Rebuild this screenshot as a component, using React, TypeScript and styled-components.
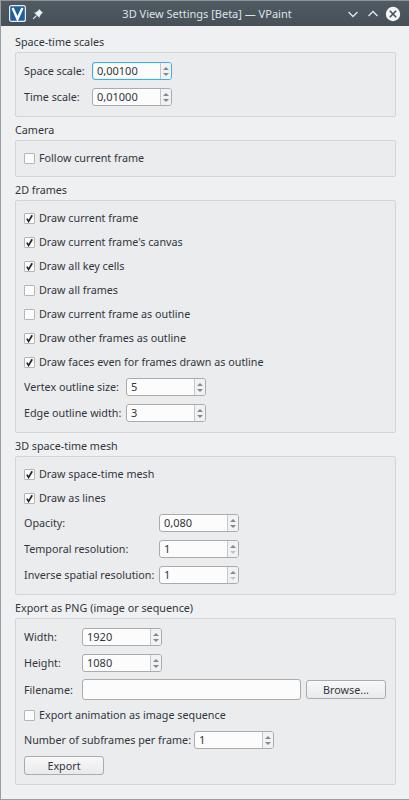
import React from "react";
import styled, { createGlobalStyle } from "styled-components";

const Global = createGlobalStyle`
  html, body { margin: 0; padding: 0; background: #eff0f1; }
  body { font-family: "Noto Sans", "DejaVu Sans", sans-serif; font-size: 10.75px; color: #31363b; }
`;

const Win = styled.div`
  width: 409px; height: 800px; box-sizing: border-box; display: flex; flex-direction: column;
  background: #eff0f1; overflow: hidden;
  border-left: 1px solid #9b9ea0; border-bottom: 1px solid #9b9ea0;
`;
const TitleBar = styled.div`
  height: 26px; flex: none; margin-left: -1px; display: flex; align-items: center;
  border-top: 1px solid #8f9396; box-sizing: border-box;
  background: linear-gradient(#4f5a62, #475057); color: #dfe2e4; padding: 0 8px 0 9px;
`;
const Logo = styled.svg`width: 17px; height: 17px; flex: none;`;
const Pin = styled.svg`width: 12px; height: 12px; margin-left: 6px; flex: none;`;
const TitleText = styled.div`flex: 1; text-align: center; font-size: 11px; padding-left: 29px; white-space: nowrap;`;
const WinBtn = styled.svg`width: 16px; height: 16px; flex: none; margin-left: 4px;`;

const Content = styled.div`
  flex: 1; padding: 8px 13px 0 14px; display: flex; flex-direction: column; gap: 5px;
`;
const Section = styled.section`display: flex; flex-direction: column;`;
const SectionTitle = styled.div`height: 16px; line-height: 16px; margin-bottom: 2px;`;
const Box = styled.div<{ $top?: number; $bottom?: number }>`
  border: 1px solid #d2d4d6; border-radius: 2px; background: #ebecee;
  padding: ${(p) => p.$top ?? 8}px 9px ${(p) => p.$bottom ?? 10}px 8px; display: flex; flex-direction: column;
`;
const Row = styled.div<{ $mt?: number }>`
  display: flex; align-items: center; min-height: 18px; margin-top: ${(p) => p.$mt ?? 0}px;
`;
const Check = styled.span`
  width: 9px; height: 9px; border: 1px solid #b4b6b8; border-radius: 1px; background: #fcfcfc;
  margin-right: 4px; flex: none; display: flex; align-items: center; justify-content: center;
`;
const CheckMark = styled.svg`width: 9px; height: 9px; display: block;`;
const Label = styled.span<{ $w?: number }>`
  white-space: nowrap; ${(p) => (p.$w ? `width: ${p.$w}px; flex: none;` : "")}
`;
const Spin = styled.div<{ $focus?: boolean }>`
  width: 80px; height: 18px; box-sizing: border-box; flex: none; display: flex;
  border: 1px solid ${(p) => (p.$focus ? "#3daee9" : "#a9abad")}; border-radius: 3px; background: #fcfcfc;
  ${(p) => (p.$focus ? "box-shadow: inset 0 0 1px #3daee9;" : "")}
`;
const SpinValue = styled.div`flex: 1; padding-left: 4px; line-height: 16px; font-size: 11px;`;
const SpinButtons = styled.div`
  width: 10px; flex: none; border-left: 1px solid #c4c6c8; background: #f1f2f3; border-radius: 0 2px 2px 0;
  display: flex; flex-direction: column; align-items: center; justify-content: center; gap: 3px;
`;
const Arrow = styled.span<{ $down?: boolean; $dim?: boolean }>`
  width: 0; height: 0; border-left: 3px solid transparent; border-right: 3px solid transparent;
  ${(p) => (p.$down ? "border-top" : "border-bottom")}: 3.5px solid ${(p) => (p.$dim ? "#c2c4c6" : "#85898c")};
`;
const LineEdit = styled.div`
  width: 219px; height: 21px; box-sizing: border-box; flex: none;
  border: 1px solid #a9abad; border-radius: 3px; background: #fcfcfc;
`;
const Button = styled.button<{ $ml?: number }>`
  width: 80px; height: 19px; box-sizing: border-box; padding: 0; flex: none; margin-left: ${(p) => p.$ml ?? 0}px;
  font: inherit; color: inherit; border: 1px solid #a9abad; border-radius: 3px;
  background: linear-gradient(#f8f8f9, #e9eaeb);
`;

const C = ({ on, children, mt }: { on?: boolean; children: React.ReactNode; mt?: number }) => (
  <Row $mt={mt}>
    <Check>
      {on && (
        <CheckMark viewBox="0 0 9 9">
          <path d="M1.8 4.6 L3.6 7.4 L7.2 1.2" fill="none" stroke="#23272b" strokeWidth="1.7" />
        </CheckMark>
      )}
    </Check>
    <Label>{children}</Label>
  </Row>
);

const S = ({ label, w, value, focus, dim, mt }: { label: string; w: number; value: string; focus?: boolean; dim?: boolean; mt?: number }) => (
  <Row $mt={mt}>
    <Label $w={w}>{label}</Label>
    <Spin $focus={focus}>
      <SpinValue>{value}</SpinValue>
      <SpinButtons>
        <Arrow />
        <Arrow $down $dim={dim} />
      </SpinButtons>
    </Spin>
  </Row>
);

export default function App() {
  return (
    <Win>
      <Global />
      <TitleBar>
        <Logo viewBox="0 0 17 17">
          <rect x="0.6" y="0.6" width="15.8" height="15.8" rx="2" fill="#1d5f9f" stroke="#e8eef4" strokeWidth="1.2" />
          <path d="M3.6 3 L8.5 14 L13.4 3" fill="none" stroke="#fff" strokeWidth="2.4" />
        </Logo>
        <Pin viewBox="0 0 12 12">
          <path d="M7 1 L11 5 L9.6 5.6 L7.6 8.4 L7.6 10 L2 4.4 L3.6 4.4 L6.4 2.4 Z" fill="#eef0f1" />
          <path d="M4.4 7.6 L1.2 10.8" stroke="#eef0f1" strokeWidth="1.2" />
        </Pin>
        <TitleText>3D View Settings [Beta] — VPaint</TitleText>
        <WinBtn viewBox="0 0 16 16">
          <path d="M3.5 6 L8 10.5 L12.5 6" fill="none" stroke="#e6e8ea" strokeWidth="1.3" />
        </WinBtn>
        <WinBtn viewBox="0 0 16 16">
          <path d="M3.5 10 L8 5.5 L12.5 10" fill="none" stroke="#e6e8ea" strokeWidth="1.3" />
        </WinBtn>
        <WinBtn viewBox="0 0 16 16">
          <circle cx="8" cy="8" r="7.2" fill="#f4f5f6" />
          <path d="M4.8 4.8 L11.2 11.2 M11.2 4.8 L4.8 11.2" stroke="#474f56" strokeWidth="1.6" />
        </WinBtn>
      </TitleBar>
      <Content>
        <Section>
          <SectionTitle>Space-time scales</SectionTitle>
          <Box $top={9}>
            <S label="Space scale:" w={68} value="0,00100" focus />
            <S label="Time scale:" w={68} value="0,01000" mt={8} />
          </Box>
        </Section>
        <Section>
          <SectionTitle>Camera</SectionTitle>
          <Box $bottom={9}>
            <C>Follow current frame</C>
          </Box>
        </Section>
        <Section>
          <SectionTitle>2D frames</SectionTitle>
          <Box>
            <C on>Draw current frame</C>
            <C on mt={6}>Draw current frame's canvas</C>
            <C on mt={6}>Draw all key cells</C>
            <C mt={6}>Draw all frames</C>
            <C mt={6}>Draw current frame as outline</C>
            <C on mt={6}>Draw other frames as outline</C>
            <C on mt={6}>Draw faces even for frames drawn as outline</C>
            <S label="Vertex outline size:" w={102} value="5" mt={7} />
            <S label="Edge outline width:" w={102} value="3" mt={8} />
          </Box>
        </Section>
        <Section>
          <SectionTitle>3D space-time mesh</SectionTitle>
          <Box>
            <C on>Draw space-time mesh</C>
            <C on mt={6}>Draw as lines</C>
            <S label="Opacity:" w={135} value="0,080" mt={7} />
            <S label="Temporal resolution:" w={135} value="1" mt={8} dim />
            <S label="Inverse spatial resolution:" w={135} value="1" mt={8} dim />
          </Box>
        </Section>
        <Section>
          <SectionTitle>Export as PNG (image or sequence)</SectionTitle>
          <Box $top={9} $bottom={9}>
            <S label="Width:" w={58} value="1920" />
            <S label="Height:" w={58} value="1080" mt={8} />
            <Row $mt={7}>
              <Label $w={58}>Filename:</Label>
              <LineEdit />
              <Button $ml={5}>Browse...</Button>
            </Row>
            <C mt={6}>Export animation as image sequence</C>
            <S label="Number of subframes per frame:" w={170} value="1" mt={7} />
            <Row $mt={7}>
              <Button>Export</Button>
            </Row>
          </Box>
        </Section>
      </Content>
    </Win>
  );
}
